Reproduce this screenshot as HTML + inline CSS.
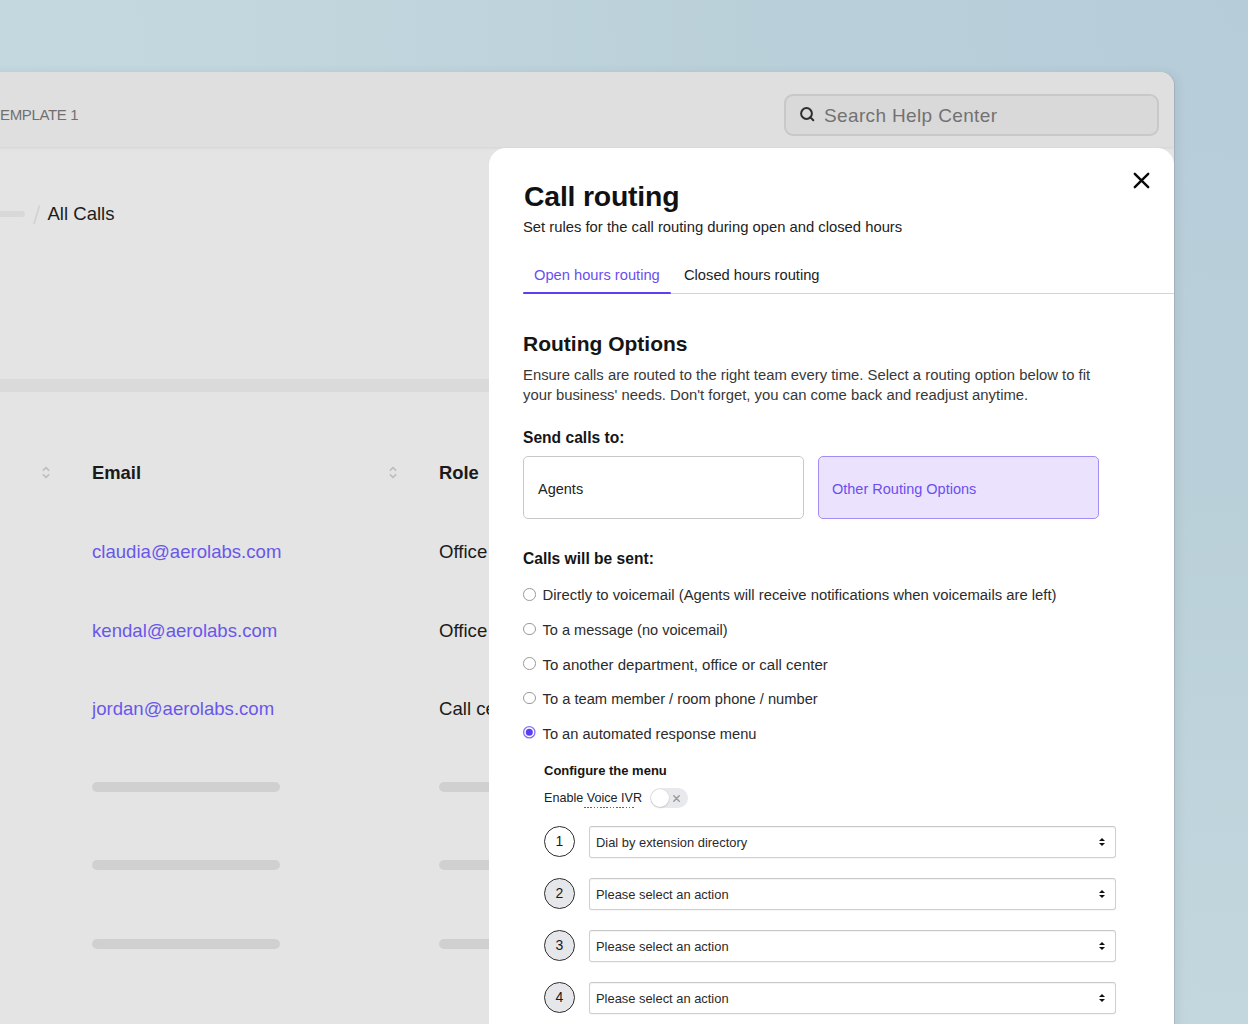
<!DOCTYPE html>
<html><head><meta charset="utf-8">
<style>
*{margin:0;padding:0;box-sizing:border-box}
html,body{width:1248px;height:1024px;overflow:hidden}
body{position:relative;font-family:"Liberation Sans",sans-serif;background:radial-gradient(circle at 100% 0%,#b6ccd9 0px,#bad0d9 500px,#c3d7de 1050px,#c4d8de 1300px);color:#1a1a1a}
.a{position:absolute;white-space:nowrap;line-height:1}
#win{position:absolute;left:-40px;top:72px;width:1214.25px;height:1000px;background:#e4e4e4;border-top-right-radius:14px;overflow:hidden;box-shadow:1px 0 0 rgba(110,115,135,0.22),4px 0 9px rgba(50,60,70,0.08)}
#hdr{position:absolute;left:0;top:0;width:100%;height:76px;background:#dfdfdf;border-bottom:1px solid #d9d9d9;box-shadow:0 1px 2px rgba(0,0,0,0.04)}
#search{position:absolute;left:824px;top:22px;width:375px;height:41.5px;border:2px solid #c8c8c8;background:#d9d9d9;border-radius:9px}
#modal{position:absolute;left:489px;top:148px;width:685.25px;height:900px;background:#fff;border-top-left-radius:17px;border-top-right-radius:17px;overflow:hidden}
.m{position:absolute;white-space:nowrap;line-height:1}
.bar{position:absolute;height:10px;border-radius:5px;background:#d0d0d0}
.email{color:#6957ea;font-size:18.6px;margin-top:1px}
.role{color:#1a1a1a;font-size:18.6px;margin-top:1px}
.radio{position:absolute;width:12.6px;height:12.6px;border-radius:50%;border:1.3px solid #9a9a9a;background:#fff;margin-left:0.2px}
.rtxt{position:absolute;white-space:nowrap;line-height:1;font-size:14.85px;color:#2b2b2b;margin-left:0.6px}
.num{position:absolute;width:31px;height:31px;border-radius:50%;border:1.5px solid #2e2e2e;background:#e6e7ea;font-size:14px;text-align:center;line-height:28px;color:#1a1a1a}
.sel{position:absolute;left:100px;width:527px;height:31.5px;border:1px solid #d0d0d0;border-top-color:#c8c8c8;border-radius:3px;background:#fff;box-shadow:inset 0 1px 1px rgba(0,0,0,0.05),0 1px 1px rgba(0,0,0,0.04)}
.sel span{position:absolute;left:6px;top:10px;font-size:12.9px;color:#2a2a2a;line-height:1}
.sel i{position:absolute;right:10px;top:11px;width:0;height:0;border-left:3.5px solid transparent;border-right:3.5px solid transparent;border-bottom:3.5px solid #111}
.sel i:after{content:"";position:absolute;left:-3.5px;top:4.5px;border-left:3.5px solid transparent;border-right:3.5px solid transparent;border-top:3.5px solid #111}
</style></head><body>
<div id="win">
  <div id="hdr">
    <div class="a" style="left:40px;top:34.5px;font-size:15px;color:#707070;letter-spacing:-0.35px">EMPLATE 1</div>
    <div id="search">
      <svg style="position:absolute;left:13px;top:10px" width="17" height="17" viewBox="0 0 17 17"><circle cx="7.5" cy="7.5" r="5.4" fill="none" stroke="#2e2e2e" stroke-width="2"/><line x1="11.4" y1="11.4" x2="14.3" y2="14.3" stroke="#2e2e2e" stroke-width="2" stroke-linecap="round"/></svg>
      <div class="a" style="left:38px;top:9.5px;font-size:19px;letter-spacing:0.36px;color:#727272">Search Help Center</div>
    </div>
  </div>
  <!-- breadcrumb -->
  <div class="bar" style="left:0;top:139px;width:65px;height:6px;background:#d8d8d8"></div>
  <svg style="position:absolute;left:70px;top:130px" width="14" height="26" viewBox="0 0 14 26"><line x1="9.4" y1="4" x2="4.1" y2="21.4" stroke="#d3d3d3" stroke-width="1.8" stroke-linecap="round"/></svg>
  <div class="a" style="left:87.5px;top:133px;font-size:18.55px;color:#1c1c1c">All Calls</div>
  <!-- band -->
  <div style="position:absolute;left:0;top:306.8px;width:100%;height:13.2px;background:#dadada"></div>
  <!-- table header -->
  <svg style="position:absolute;left:80.5px;top:394px" width="10" height="14" viewBox="0 0 10 14"><path d="M1.8 4.6 L5 1.6 L8.2 4.6 M1.8 8.4 L5 11.4 L8.2 8.4" fill="none" stroke="#bdbdbd" stroke-width="1.5"/></svg>
  <div class="a" style="left:132px;top:392px;font-size:18.4px;font-weight:700;color:#1a1a1a">Email</div>
  <svg style="position:absolute;left:427.5px;top:394px" width="10" height="14" viewBox="0 0 10 14"><path d="M1.8 4.6 L5 1.6 L8.2 4.6 M1.8 8.4 L5 11.4 L8.2 8.4" fill="none" stroke="#bdbdbd" stroke-width="1.5"/></svg>
  <div class="a" style="left:479px;top:392px;font-size:18.4px;font-weight:700;color:#1a1a1a">Role</div>
  <!-- rows -->
  <div class="a email" style="left:132px;top:470px">claudia@aerolabs.com</div>
  <div class="a role" style="left:479px;top:470px">Office</div>
  <div class="a email" style="left:132px;top:549px">kendal@aerolabs.com</div>
  <div class="a role" style="left:479px;top:549px">Office</div>
  <div class="a email" style="left:132px;top:627px">jordan@aerolabs.com</div>
  <div class="a role" style="left:479px;top:627px">Call center</div>
  <div class="bar" style="left:132px;top:710px;width:188px"></div>
  <div class="bar" style="left:479px;top:710px;width:120px"></div>
  <div class="bar" style="left:132px;top:788px;width:188px"></div>
  <div class="bar" style="left:479px;top:788px;width:120px"></div>
  <div class="bar" style="left:132px;top:867px;width:188px"></div>
  <div class="bar" style="left:479px;top:867px;width:120px"></div>
</div>

<div id="modal">
  <svg style="position:absolute;left:644px;top:24.25px" width="17" height="17" viewBox="0 0 17 17"><path d="M1.8 1.8 L15.2 15.2 M15.2 1.8 L1.8 15.2" stroke="#0a0a0a" stroke-width="2.4" stroke-linecap="round"/></svg>
  <div class="m" style="left:35px;top:33.6px;font-size:28.4px;letter-spacing:-0.2px;font-weight:700;color:#111">Call routing</div>
  <div class="m" style="left:34px;top:72px;font-size:14.8px;color:#222">Set rules for the call routing during open and closed hours</div>
  <!-- tabs -->
  <div class="m" style="left:45px;top:119.7px;font-size:14.7px;color:#6a4ff0">Open hours routing</div>
  <div class="m" style="left:195px;top:119.7px;font-size:14.7px;color:#222">Closed hours routing</div>
  <div style="position:absolute;left:34px;top:145px;width:651px;height:1px;background:#d4d4d4"></div>
  <div style="position:absolute;left:34px;top:144px;width:148px;height:2px;background:#5b3ff5;border-radius:1px"></div>
  <!-- routing options -->
  <div class="m" style="left:34px;top:185px;font-size:21px;font-weight:700;color:#151515">Routing Options</div>
  <div class="m" style="left:34px;top:216.5px;font-size:14.83px;color:#383838;line-height:20px">Ensure calls are routed to the right team every time. Select a routing option below to fit<br>your business' needs. Don't forget, you can come back and readjust anytime.</div>
  <div class="m" style="left:34px;top:282px;font-size:15.6px;font-weight:700;color:#151515">Send calls to:</div>
  <div style="position:absolute;left:34px;top:308px;width:281px;height:62.7px;border:1.5px solid #c8c8c8;border-radius:5px;background:#fff"></div>
  <div class="m" style="left:49px;top:333.7px;font-size:14.5px;color:#222">Agents</div>
  <div style="position:absolute;left:329px;top:308px;width:281px;height:62.7px;border:1.5px solid #a48cf6;border-radius:5px;background:#ebe3fd"></div>
  <div class="m" style="left:343px;top:333.7px;font-size:14.5px;color:#6a4ff0">Other Routing Options</div>
  <div class="m" style="left:34px;top:403px;font-size:15.6px;font-weight:700;color:#151515">Calls will be sent:</div>
  <!-- radios -->
  <div class="radio" style="left:34px;top:440.10px"></div>
  <div class="rtxt" style="left:53px;top:439.95px">Directly to voicemail (Agents will receive notifications when voicemails are left)</div>
  <div class="radio" style="left:34px;top:474.65px"></div>
  <div class="rtxt" style="left:53px;top:474.65px;font-size:14.54px">To a message (no voicemail)</div>
  <div class="radio" style="left:34px;top:509.20px"></div>
  <div class="rtxt" style="left:53px;top:509.35px;font-size:15.02px">To another department, office or call center</div>
  <div class="radio" style="left:34px;top:543.75px"></div>
  <div class="rtxt" style="left:53px;top:544.05px;font-size:14.69px">To a team member / room phone / number</div>
  <svg style="position:absolute;left:34.2px;top:578.3px" width="13" height="13" viewBox="0 0 13 13"><circle cx="6.3" cy="6.3" r="5.65" fill="#fff" stroke="#8571f3" stroke-width="1.3"/><circle cx="6.3" cy="6.3" r="3.5" fill="#5a3ef5"/></svg>
  <div class="rtxt" style="left:53px;top:578.75px;font-size:14.63px">To an automated response menu</div>
  <!-- configure -->
  <div class="m" style="left:55px;top:616px;font-size:13px;font-weight:700;color:#151515">Configure the menu</div>
  <div class="m" style="left:55px;top:643.5px;font-size:12.6px;color:#222">Enable Voice IVR</div>
  <div style="position:absolute;left:94.5px;top:658.5px;width:51px;height:1px;background:repeating-linear-gradient(90deg,#666 0 1.6px,transparent 1.6px 3.2px)"></div>
  <div style="position:absolute;left:160.6px;top:640.3px;width:38px;height:20px;border-radius:10px;background:#e8e9ed"></div>
  <div style="position:absolute;left:161.5px;top:641.3px;width:18px;height:18px;border-radius:50%;background:#fff;box-shadow:0 0 0 0.5px rgba(0,0,0,0.06),0 1px 2px rgba(0,0,0,0.12)"></div>
  <svg style="position:absolute;left:184.3px;top:646.7px" width="7" height="7" viewBox="0 0 7 7"><path d="M0.8 0.8 L6.2 6.2 M6.2 0.8 L0.8 6.2" stroke="#9a9a9a" stroke-width="1.5" stroke-linecap="round"/></svg>
  <!-- rows -->
  <div class="num" style="left:55px;top:678px;background:#fff">1</div>
  <div class="sel" style="top:678px"><span>Dial by extension directory</span><i></i></div>
  <div class="num" style="left:55px;top:730px">2</div>
  <div class="sel" style="top:730px"><span>Please select an action</span><i></i></div>
  <div class="num" style="left:55px;top:782px">3</div>
  <div class="sel" style="top:782px"><span>Please select an action</span><i></i></div>
  <div class="num" style="left:55px;top:834px">4</div>
  <div class="sel" style="top:834px"><span>Please select an action</span><i></i></div>
</div>
</body></html>
